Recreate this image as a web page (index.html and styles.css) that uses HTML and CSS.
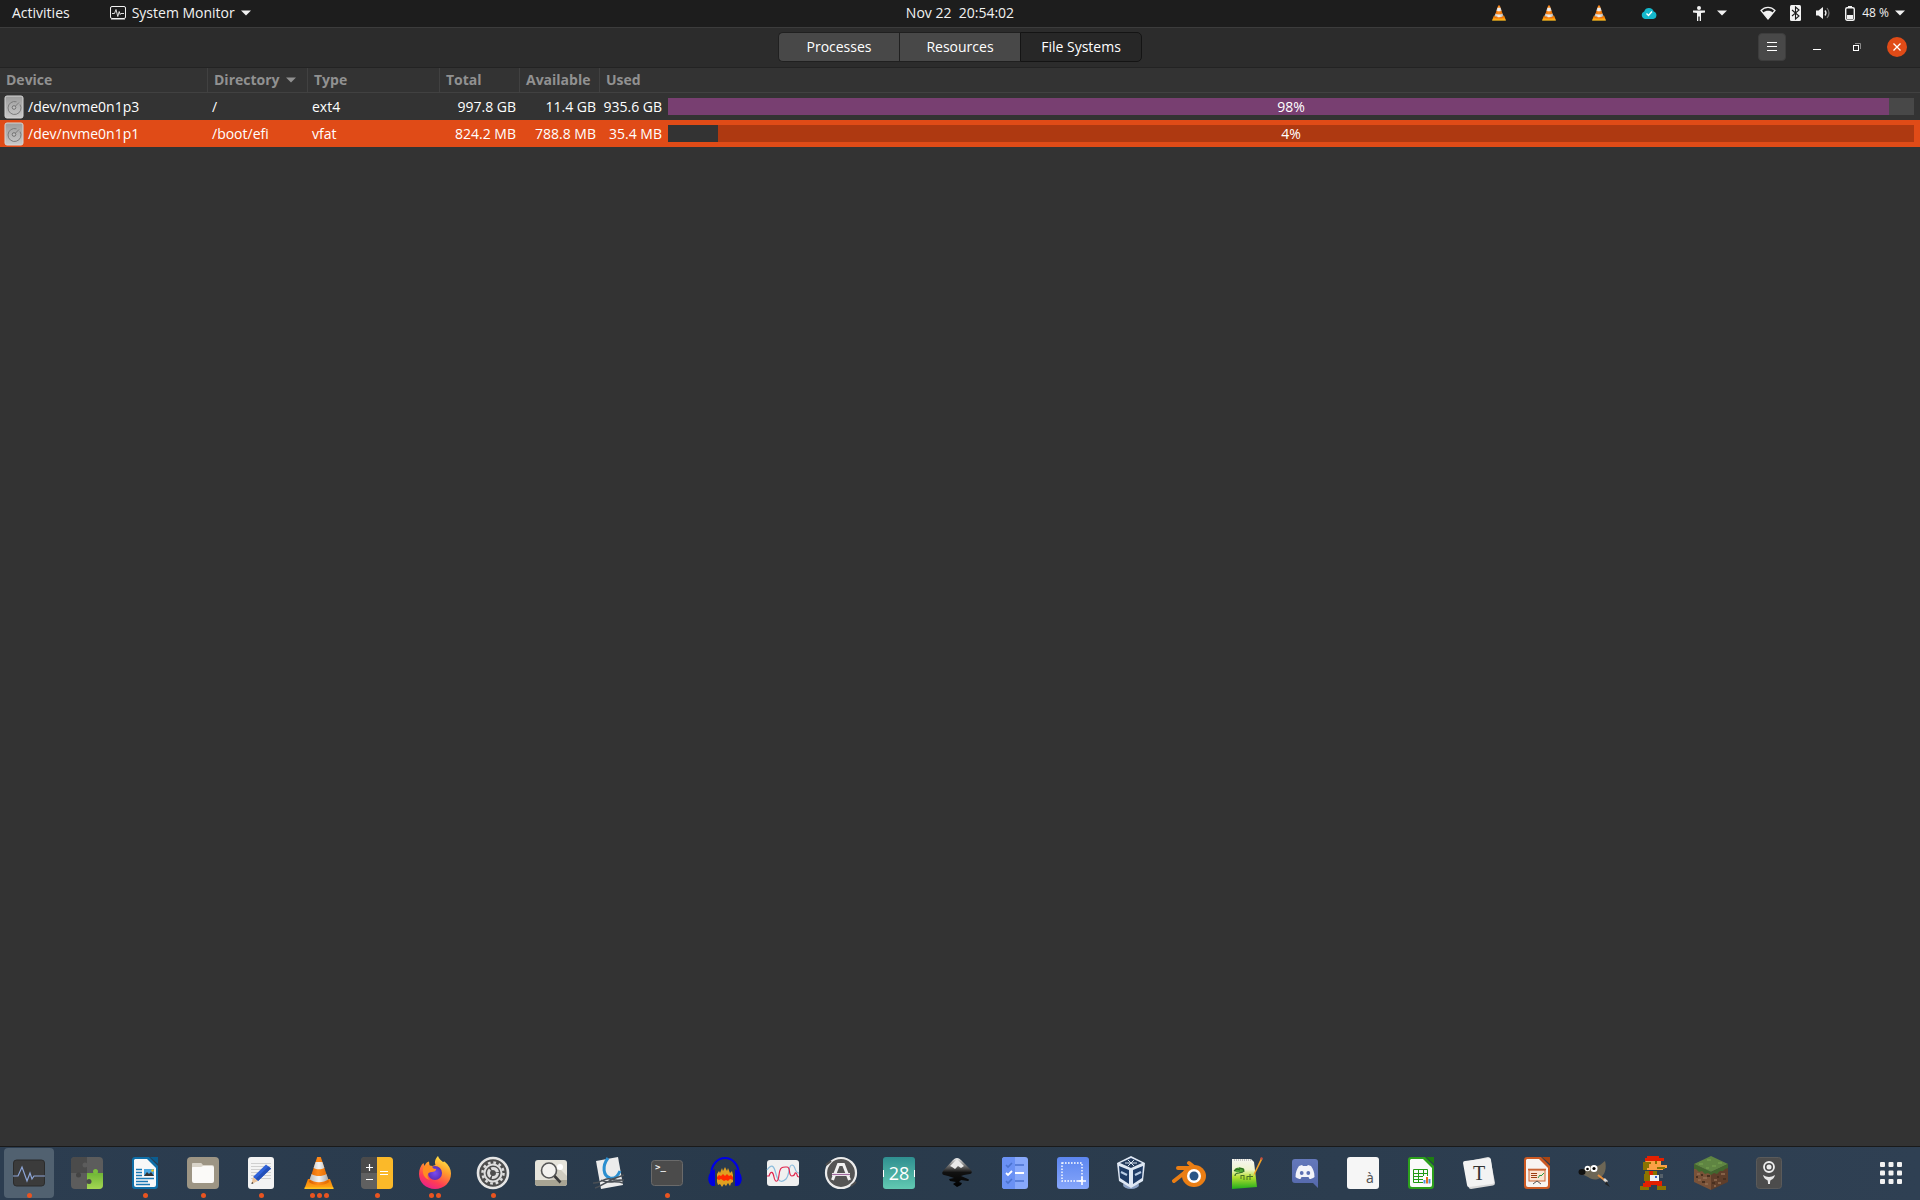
FILE: index.html
```html
<!DOCTYPE html>
<html lang="en">
<head>
<meta charset="utf-8">
<title>System Monitor</title>
<link rel="stylesheet" href="styles.css">
</head>
<body>
<svg class="defs" aria-hidden="true">
  <defs>
    <linearGradient id="gOrange" x1="0" x2="1"><stop offset="0" stop-color="#d95f00"/><stop offset=".45" stop-color="#ff8a1a"/><stop offset="1" stop-color="#e06a00"/></linearGradient>
    <linearGradient id="gSilver" x1="0" x2="1"><stop offset="0" stop-color="#b9b9b9"/><stop offset=".5" stop-color="#f4f4f4"/><stop offset="1" stop-color="#a9a9a9"/></linearGradient>
    <linearGradient id="gBase" x1="0" x2="0" y1="0" y2="1"><stop offset="0" stop-color="#f57900"/><stop offset="1" stop-color="#ffab1a"/></linearGradient>
    <linearGradient id="gGreen" x1="0" x2="0" y1="0" y2="1"><stop offset="0" stop-color="#6fb536"/><stop offset="1" stop-color="#a4d653"/></linearGradient>
    <linearGradient id="gTeal" x1="0" x2="0" y1="0" y2="1"><stop offset="0" stop-color="#2f8f90"/><stop offset="1" stop-color="#62c9b2"/></linearGradient>
    <linearGradient id="gBlue" x1="0" x2="0" y1="0" y2="1"><stop offset="0" stop-color="#5c86f0"/><stop offset="1" stop-color="#86a6fa"/></linearGradient>
    <linearGradient id="gFox" x1=".8" x2=".3" y1="0" y2="1"><stop offset="0" stop-color="#fff04a"/><stop offset=".4" stop-color="#ff9a2c"/><stop offset=".75" stop-color="#ff3d54"/><stop offset="1" stop-color="#e8208c"/></linearGradient>
    <radialGradient id="gGlobe"><stop offset="0" stop-color="#7a4bf0"/><stop offset="1" stop-color="#5a2fb8"/></radialGradient>
    <linearGradient id="gInk" x1="0" x2="0" y1="0" y2="1"><stop offset="0" stop-color="#f5f5f5"/><stop offset=".25" stop-color="#777"/><stop offset=".5" stop-color="#111"/><stop offset="1" stop-color="#000"/></linearGradient>
    <linearGradient id="gNote" x1="0" x2="0" y1="0" y2="1"><stop offset="0" stop-color="#f6f6f2"/><stop offset=".35" stop-color="#f0f4d0"/><stop offset=".6" stop-color="#b6e030"/><stop offset="1" stop-color="#1fae1c"/></linearGradient>
    <linearGradient id="gDisc" x1="0" x2="0" y1="0" y2="1"><stop offset="0" stop-color="#6478bb"/><stop offset="1" stop-color="#5568ab"/></linearGradient>
    <linearGradient id="gDisk" x1="0" x2="0" y1="0" y2="1"><stop offset="0" stop-color="#9c9c9c"/><stop offset="1" stop-color="#c9c9c9"/></linearGradient>
    <symbol id="cone" viewBox="0 0 34 34">
      <path d="M6 23h22l3.500 9.500h-29z" fill="url(#gBase)"/><path d="M2.500 31.500h29v1.500h-29z" fill="#ffc31f"/>
      <path d="M15.200 1h3.600L27 26c-4 4-16 4-20 0z" fill="url(#gOrange)"/>
      <path d="M13.600 6h6.800l2 6c-3 1.800-7.800 1.800-10.800 0zM9.600 18c4 2.800 10.800 2.800 14.800 0l2 5.600c-5 3.400-13.800 3.400-18.800 0z" fill="url(#gSilver)"/>
    </symbol>
    <symbol id="disk" viewBox="0 0 20 24">
      <rect x="1" y="1" width="18" height="22" rx="2" fill="url(#gDisk)" stroke="#d6d6d6"/>
      <path d="M16 9.500A6.500 6.500 0 1 1 12.500 6.800M11.500 11l3.500-3.500" fill="none" stroke="#7b7b7b"/>
      <circle cx="10" cy="12.500" r="1.800" fill="#c2c2c2" stroke="#707070"/>
    </symbol>
    <symbol id="caret" viewBox="0 0 10 6"><path d="M0 .5h10L5 5.500z" fill="currentColor"/></symbol>
  </defs>
</svg>

<header class="topbar">
  <nav class="topbar-left">
    <button class="top-btn">Activities</button>
    <button class="top-btn">
      <svg width="16" height="14" viewBox="0 0 16 14" fill="none" stroke="#f2f2f2"><rect x=".5" y=".5" width="15" height="12" rx="1.500"/><path d="M2 7.500h2.500L6 3.500l1.800 7 1.400-5 1 3 .6-1H14" stroke-width=".9"/><path d="M1 13.500h14" opacity=".5"/></svg>
      System Monitor
      <svg width="10" height="6"><use href="#caret"/></svg>
    </button>
  </nav>
  <button class="top-btn clock">Nov 22&nbsp; 20:54:02</button>
  <div class="tray">
    <button class="tray-btn" aria-label="VLC"><svg width="16" height="16"><use href="#cone"/></svg></button>
    <button class="tray-btn" aria-label="VLC"><svg width="16" height="16"><use href="#cone"/></svg></button>
    <button class="tray-btn" aria-label="VLC"><svg width="16" height="16"><use href="#cone"/></svg></button>
    <button class="tray-btn" aria-label="Cloud sync"><svg width="16" height="12" viewBox="0 0 16 12"><path d="M4 12a4 4 0 0 1-.8-7.600A5 5 0 0 1 12.700 4.600 3.800 3.800 0 0 1 12.200 12z" fill="#14b8cc"/><path d="M5.500 6.500l2 2 3.500-4" fill="none" stroke="#fff" stroke-width="1.400"/></svg></button>
    <button class="top-btn access" aria-label="Accessibility">
      <svg width="12" height="15" viewBox="0 0 12 15" fill="#f2f2f2"><circle cx="6" cy="2" r="2"/><path d="M0 4.500h12v2L8 7v8H6.700v-4.500H5.300V15H4V7L0 6.500z"/></svg>
      <svg width="10" height="6"><use href="#caret"/></svg>
    </button>
    <button class="top-btn status" aria-label="System status">
      <svg width="16" height="14" viewBox="0 0 16 14"><path d="M1 4.500C5 .2 11 .2 15 4.500L8 13z" fill="none" stroke="#f2f2f2" stroke-width="1.200"/><path d="M3 6.500c3-2.400 7-2.400 10 0L8 13z" fill="#f2f2f2"/></svg>
      <svg width="11" height="16" viewBox="0 0 11 16"><rect width="11" height="16" rx="1.500" fill="#f2f2f2"/><path d="M2 5l7 6-3.500 3V2L9 5l-7 6" fill="none" stroke="#1c1c1c" stroke-width="1.100"/></svg>
      <svg width="16" height="14" viewBox="0 0 16 14"><path d="M1 4.500h2.500L8 1v12L3.500 9.500H1z" fill="#f2f2f2"/><path d="M10 4.500q2 2.500 0 5" fill="none" stroke="#f2f2f2" stroke-width="1.300"/><path d="M12 2q4 5 0 10" fill="none" stroke="#777" stroke-width="1.200"/></svg>
      <svg width="10" height="15" viewBox="0 0 10 15"><rect x=".7" y="1.700" width="8.600" height="12.600" rx="1.500" fill="none" stroke="#f2f2f2" stroke-width="1.400"/><path d="M3 0h4v2H3zM2 9h6v4H2z" fill="#f2f2f2"/></svg>
      <span class="battery">48 %</span>
      <svg width="10" height="6"><use href="#caret"/></svg>
    </button>
  </div>
</header>

<div class="headerbar">
  <div class="tabs" role="tablist">
    <button class="tab" role="tab">Processes</button>
    <button class="tab" role="tab">Resources</button>
    <button class="tab active" role="tab" aria-selected="true">File Systems</button>
  </div>
  <div class="controls">
    <button class="menu-btn" aria-label="Menu"><svg width="10" height="10" viewBox="0 0 10 10" stroke="#fff"><path d="M0 .5h10M0 4.500h10M0 8.500h10"/></svg></button>
    <button class="win-btn" aria-label="Minimize"><svg width="8" height="8" viewBox="0 0 8 8"><path d="M0 6h8v1H0z" fill="#fff"/></svg></button>
    <button class="win-btn" aria-label="Restore"><svg width="8" height="8" viewBox="0 0 8 8" fill="none"><path d="M2 .5h5.500V6" stroke="#8a8a8a"/><rect x=".5" y="2.500" width="5" height="5" stroke="#fff"/></svg></button>
    <button class="win-btn close" aria-label="Close"><svg width="8" height="8" viewBox="0 0 8 8"><path d="M.5.500l7 7M7.500.500l-7 7" stroke="#fff" stroke-width="1.300"/></svg></button>
  </div>
</div>

<main class="content">
  <table class="fs">
    <colgroup><col class="c-device"><col class="c-dir"><col class="c-type"><col class="c-size"><col class="c-size"><col class="c-used"><col></colgroup>
    <thead>
      <tr><th>Device</th><th aria-sort="ascending">Directory <svg class="sort" width="10" height="6"><use href="#caret"/></svg></th><th>Type</th><th>Total</th><th>Available</th><th colspan="2">Used</th></tr>
    </thead>
    <tbody>
      <tr>
        <td><div class="device"><svg width="20" height="24"><use href="#disk"/></svg>/dev/nvme0n1p3</div></td>
        <td>/</td><td>ext4</td><td class="num">997.8 GB</td><td class="num">11.4 GB</td><td class="num">935.6 GB</td>
        <td class="usage"><div class="bar"><div class="fill" style="width:98%"></div><span>98%</span></div></td>
      </tr>
      <tr class="selected">
        <td><div class="device"><svg width="20" height="24"><use href="#disk"/></svg>/dev/nvme0n1p1</div></td>
        <td>/boot/efi</td><td>vfat</td><td class="num">824.2 MB</td><td class="num">788.8 MB</td><td class="num">35.4 MB</td>
        <td class="usage"><div class="bar"><div class="fill" style="width:4%"></div><span>4%</span></div></td>
      </tr>
    </tbody>
  </table>
</main>

<footer class="dock">
  <button class="app current" aria-label="System Monitor"><svg viewBox="0 0 34 34"><rect x="1.500" y="4" width="31" height="26" rx="3" fill="#3b3b3b" stroke="#2b2b2b"/><path d="M1 20h5l4-9 5 14 3-8 2 6 2-3h11" fill="none" stroke="#8ea6d8" stroke-width="1.200"/></svg><span class="dots"><i></i></span></button>
  <button class="app" aria-label="Extensions"><svg viewBox="0 0 34 34"><rect x="1" y="1" width="32" height="32" rx="4" fill="#5c5c5c"/><path d="M5 1h12v16H1V5a4 4 0 0 1 4-4z" fill="#4b4b4b"/><path d="M17 17h16v12a4 4 0 0 1-4 4H17z" fill="url(#gGreen)"/><circle cx="25.500" cy="15.500" r="2.500" fill="#79bd3c"/><circle cx="15" cy="9" r="2.500" fill="#5c5c5c"/><circle cx="8.500" cy="19" r="2.500" fill="#444"/><circle cx="19" cy="25.500" r="2.500" fill="#4a4a4a"/></svg></button>
  <button class="app" aria-label="LibreOffice Writer"><svg viewBox="0 0 34 34"><path d="M7 1h14l9 9v20a3 3 0 0 1-3 3H7a3 3 0 0 1-3-3V4a3 3 0 0 1 3-3z" fill="#0f6fa8"/><path d="M7 3h12l9 9v17a2 2 0 0 1-2 2H8a2 2 0 0 1-2-2V4z" fill="#f8f8f8"/><path d="M22 1h8v7z" fill="#0b5d90"/><rect x="16" y="13" width="10" height="7" fill="#4aa6e0"/><path d="M16 20l3-4 2 2 2-2 3 4z" fill="#333"/><circle cx="24.500" cy="14.500" r="1.200" fill="#f5c211"/><path d="M8 13.500h6M8 16.500h6M8 19.500h6M8 22.500h18M8 25.500h12M8 28.500h14" stroke="#1a78b4" stroke-width="1.500"/></svg><span class="dots"><i></i></span></button>
  <button class="app" aria-label="Files"><svg viewBox="0 0 34 34"><rect x="1" y="1" width="32" height="32" rx="4" fill="#9d9584"/><path d="M6 12V8q0-1 2-1h7l2 2h9q2 0 2 2v4z" fill="#d9d4c9"/><rect x="6" y="10" width="22" height="17" rx="2" fill="#fbfaf8"/><path d="M6 11V8q0-1 2-1h7l2 3-2 1z" fill="#d9d4c9"/></svg><span class="dots"><i></i></span></button>
  <button class="app" aria-label="Text Editor"><svg viewBox="0 0 34 34"><rect x="4" y="1" width="26" height="32" rx="3" fill="#f3f3f3"/><path d="M7 7.500h20M7 10.500h20M7 13.500h20M7 16.500h20M7 19.500h20M7 22.500h20" stroke="#cfcfcf"/><path d="M22 8.500l5 4L14 25l-5-4z" fill="#2f62d8"/><path d="M24.500 10.500l2.500 2L14 25l-2.500-2z" fill="#234fb8"/><path d="M9 21l5 4-6.500 3z" fill="#e9c29b"/><path d="M8 26l1.500 1.200-2 .8z" fill="#222"/></svg><span class="dots"><i></i></span></button>
  <button class="app" aria-label="VLC"><svg viewBox="0 0 34 34"><use href="#cone"/></svg><span class="dots"><i></i><i></i><i></i></span></button>
  <button class="app" aria-label="Calculator"><svg viewBox="0 0 34 34"><rect x="1" y="1" width="32" height="32" rx="4" fill="#606060"/><path d="M5 1h12v16H1V5a4 4 0 0 1 4-4z" fill="#4a4a4a"/><path d="M17 1h12a4 4 0 0 1 4 4v24a4 4 0 0 1-4 4H17z" fill="#fbb929"/><path d="M6 11.500h7M9.500 8v7M6 23.500h7M20 15.500h8M20 18.500h8" stroke="#fff" stroke-width="1.200"/></svg><span class="dots"><i></i></span></button>
  <button class="app" aria-label="Firefox"><svg viewBox="0 0 34 34"><path d="M17 33C8 33 1 26.500 1 18 1 13 3 9 5.500 7l1 3C8 7 9 6 11 5.500l.5 4 3 .5 3-1C16 5 18 2 20 0c1 3 3 4 5 6l1.500-.5C31 9 33 13 33 17.500 33 26.500 26 33 17 33z" fill="url(#gFox)"/><circle cx="17" cy="17" r="7" fill="url(#gGlobe)"/><path d="M6 10c4-2 8 0 10 3 4-1 2 3-2 3-5 0-6 5-2 8-6-1-9-8-6-14z" fill="#ff8d22"/></svg><span class="dots"><i></i><i></i></span></button>
  <button class="app" aria-label="Settings"><svg viewBox="0 0 34 34"><circle cx="17" cy="17" r="15" fill="#4d4d4d" stroke="#e5e5e5" stroke-width="2.600"/><circle cx="17" cy="17" r="10.500" fill="none" stroke="#dedede" stroke-width="2.500" stroke-dasharray="2.700 2.800"/><circle cx="17" cy="17" r="8.500" fill="none" stroke="#dedede" stroke-width="2"/><circle cx="17" cy="17" r="4.500" fill="none" stroke="#dedede" stroke-width="3" stroke-dasharray="8 1.400"/></svg><span class="dots"><i></i></span></button>
  <button class="app" aria-label="Image Viewer"><svg viewBox="0 0 34 34"><rect x="1" y="4" width="32" height="26" rx="3" fill="#e6e4db"/><path d="M1 24h32v3a3 3 0 0 1-3 3H4a3 3 0 0 1-3-3z" fill="#a8a493"/><path d="M16 24l9-12 8 8v4z" fill="#cfccc0"/><circle cx="26" cy="11" r="3" fill="#fff"/><circle cx="15" cy="14.500" r="7.500" fill="#f4f4f2" fill-opacity=".85" stroke="#555" stroke-width="1.600"/><path d="M20.500 20l6 6.500" stroke="#3a3a3a" stroke-width="2.600"/></svg></button>
  <button class="app" aria-label="Document Viewer"><svg viewBox="0 0 34 34"><path d="M4 5l22-4 5 28-22 4z" fill="#ececec"/><path d="M16 2c-6 8-5 18 2 20 4 1 8-2 10-7" fill="none" stroke="#2b8fd0" stroke-width="3"/><path d="M1 27c7 1 12-6 17-4s8 1 14 1M3 32c8-2 11-8 29-13M9 24c5 4 15 0 22 3" fill="none" stroke="#4a4f55" stroke-width="1.600"/></svg></button>
  <button class="app" aria-label="Terminal"><svg viewBox="0 0 34 34"><rect x="1.500" y="4.500" width="31" height="25" rx="3" fill="#4b4b4b" stroke="#6a6a6a"/><text x="5" y="14" class="term">&gt;_</text></svg><span class="dots"><i></i></span></button>
  <button class="app" aria-label="Audacity"><svg viewBox="0 0 34 34"><path d="M3 20C3-4 31-4 31 20" fill="none" stroke="#0000e6" stroke-width="2.200"/><path d="M7 13v17H4c-5-3-5-11 0-15zM27 13v17h3c5-3 5-11 0-15z" fill="#0000e0"/><path d="M9 18l2-3 1 2 2-5 1 3 2-4 2 4 1-3 2 5 2-2 1 4v7l-2 1-1 3-2-3-2 3-2-2-2 3-2-3-2 1-1-3z" fill="#e0a020"/><path d="M9 21l2-2 2 1 2-2 2 2 2-2 2 2 2-1 2 2v3l-3-1-2 2-2-1-2 1-3-2-2 1-2-1z" fill="#ff2a00"/></svg></button>
  <button class="app" aria-label="Power Statistics"><svg viewBox="0 0 34 34"><rect x="1" y="4" width="32" height="26" rx="3" fill="#f0f0f0"/><path d="M1 14c5-7 7-4 9 4s6 9 10 5 2-14 6-14 2 8 7 8" fill="none" stroke="#8cbcdc" stroke-width="1.200"/><path d="M1 20h2c2-6 4-4 5 1s4 7 5-2 4-8 8-8 1 9 5 9 2-4 4-3 0 4 3 4" fill="none" stroke="#e0244c" stroke-width="1.200"/></svg></button>
  <button class="app" aria-label="Software Updater"><svg viewBox="0 0 34 34"><circle cx="17" cy="17" r="15" fill="#555" stroke="#ececec" stroke-width="2.200"/><path d="M8.500 24l6-15.500h5l6 15.500M8 18.500h18" fill="none" stroke="#f2f2f2" stroke-width="3"/><path d="M8 18.500h18" stroke="#a16a9f" stroke-width="1.200"/><path d="M2 9l5-4M27 30l5-4" stroke="#4d4d4d" stroke-width="2"/></svg></button>
  <button class="app" aria-label="Calendar"><svg viewBox="0 0 34 34"><rect x="1" y="1" width="32" height="32" rx="3" fill="url(#gTeal)"/><path d="M1.500 14v7M32.500 14v7" stroke="#fff"/><text x="17" y="24" class="day">28</text></svg></button>
  <button class="app" aria-label="Inkscape"><svg viewBox="0 0 34 34"><path d="M17 2q2 0 4 2l10 10q2 3-1 4l-6 1-3 1 7 3q2 1 0 2l-7-1-2 2 3 1-1 2-4 2-4-3 3-2-6-1-1-2 5-1-6-2-4-1q-3-1-1-4L13 4q2-2 4-2z" fill="url(#gInk)"/><path d="M17 3l7 7-3 2-3-2-3 3-3-2-2-1z" fill="#e9e9e9"/></svg></button>
  <button class="app" aria-label="To Do"><svg viewBox="0 0 34 34"><rect x="4" y="1" width="26" height="32" rx="3" fill="#88a9fb"/><path d="M7 1h10v32H7a3 3 0 0 1-3-3V4a3 3 0 0 1 3-3z" fill="#6a91f4"/><path d="M8 9l2 2 4-4M8 25l2 2 4-4M17 9h9M17 25h9" fill="none" stroke="#4a72cf" stroke-width="1.600"/><path d="M8 17l2 2 4-4M17 17h9" fill="none" stroke="#fff" stroke-width="1.800"/></svg></button>
  <button class="app" aria-label="Screenshot"><svg viewBox="0 0 34 34"><rect x="1" y="1" width="32" height="32" rx="3" fill="url(#gBlue)"/><rect x="6" y="7" width="20" height="18" fill="none" stroke="#fff" stroke-width="1.400" stroke-dasharray="1.600 1.400"/><path d="M22 25h8M26 21v8" stroke="#fff" stroke-width="1.600"/></svg></button>
  <button class="app" aria-label="VirtualBox"><svg viewBox="0 0 34 34"><ellipse cx="17" cy="29" rx="8" ry="4" fill="#8ba1c4"/><path d="M17 0l14 7-2 18-12 7-12-7L3 7z" fill="#dfe8f4"/><path d="M17 2l11 5-11 5L6 7z" fill="#233a5c"/><path d="M5 10l10 4v14l-9-6zM29 10l-10 4v14l9-6z" fill="#1f3c66"/><path d="M11 7l12 0M14 4l6 6M20 4l-6 6" stroke="#d8e2ef"/><path d="M7 16l6 3M21 19l6-3" stroke="#b8cce5" stroke-width="2"/></svg></button>
  <button class="app" aria-label="Blender"><svg viewBox="0 0 34 34"><path d="M2 25L16 14M6 12h13M17 7l10 8" stroke="#ea7e14" stroke-width="4" stroke-linecap="round"/><ellipse cx="22" cy="20" rx="12" ry="11" fill="#ea7e14"/><circle cx="22" cy="20" r="7" fill="#fff"/><circle cx="22" cy="20" r="4.500" fill="#275586"/></svg></button>
  <button class="app" aria-label="Notepad++"><svg viewBox="0 0 34 34"><path d="M2 3l19 0 3 3 3 25-25 2z" fill="url(#gNote)"/><path d="M4 4h18" stroke="#999" stroke-dasharray="1 1"/><ellipse cx="9.500" cy="14" rx="5" ry="2.500" fill="#51a735"/><path d="M5 20q0-3 4-3l4-1M4 15l3-2 3 1M9 12l4 1 1 3" fill="none" stroke="#2f6a22" stroke-width="1.200"/><path d="M11 19v4M14 19v5M17 20v4M20 18v6M11 19.500h3M17 20.500h6" stroke="#476f2b"/><path d="M31 2l1.500 1L25 18l-1.500 2 .5-3z" fill="#f3a326"/><path d="M31 1l2 1-1 2-2-1z" fill="#c74c3c"/></svg></button>
  <button class="app" aria-label="Discord"><svg viewBox="0 0 34 34"><path d="M7 3h20a3 3 0 0 1 3 3v26l-5-5H7a3 3 0 0 1-3-3V6a3 3 0 0 1 3-3z" fill="url(#gDisc)"/><path d="M11 10l3-1 1 1h4l1-1 3 1c2 3 3.500 6 3.500 11-2 1.500-3.500 2-5 2l-1-2h-7l-1 2c-1.500 0-3-.5-5-2 0-5 1.500-8 3.500-11z" fill="#f4f4fa"/><circle cx="13.700" cy="17" r="1.900" fill="#5d70b3"/><circle cx="20.300" cy="17" r="1.900" fill="#5d70b3"/></svg></button>
  <button class="app" aria-label="Characters"><svg viewBox="0 0 34 34"><rect x="1" y="1" width="32" height="32" rx="3" fill="#f6f6f6"/><text x="24" y="27" class="glyph">à</text></svg></button>
  <button class="app" aria-label="LibreOffice Calc"><svg viewBox="0 0 34 34"><path d="M7 1h14l9 9v20a3 3 0 0 1-3 3H7a3 3 0 0 1-3-3V4a3 3 0 0 1 3-3z" fill="#2ca01c"/><path d="M7 3h12l9 9v17a2 2 0 0 1-2 2H8a2 2 0 0 1-2-2V4z" fill="#fafafa"/><path d="M22 1h8v7z" fill="#1d7d12"/><path d="M9.500 13.500h14v13h-14zM9 17.500h15M9 20.500h15M9 23.500h15M14.500 13v14M19.500 13v14" fill="none" stroke="#219a12"/><rect x="19" y="20" width="8" height="8" fill="#fff"/><path d="M20.500 24v3.500" stroke="#4a90d9" stroke-width="2"/><path d="M23 21v6.500" stroke="#e66f1d" stroke-width="2"/><path d="M25.500 23v4.500" stroke="#4a90d9" stroke-width="2"/></svg></button>
  <button class="app" aria-label="Typora"><svg viewBox="0 0 34 34"><path d="M2 6L26 1q2 0 2.500 2L33 27q0 2-2 2.500L9 33q-2 0-2.500-2z" fill="#d8d8d8"/><path d="M1 7q0-2 2-2l24-3q2 0 2 2l3 22q0 2-2 2L7 31q-2 0-2-2z" fill="#f3f3f3"/><text x="17" y="24" class="serif-t">T</text></svg></button>
  <button class="app" aria-label="LibreOffice Impress"><svg viewBox="0 0 34 34"><path d="M7 1h14l9 9v20a3 3 0 0 1-3 3H7a3 3 0 0 1-3-3V4a3 3 0 0 1 3-3z" fill="#cc5a24"/><path d="M7 3h12l9 9v17a2 2 0 0 1-2 2H8a2 2 0 0 1-2-2V4z" fill="#f8f4f1"/><path d="M22 1h8v7z" fill="#a84412"/><rect x="9" y="14" width="16" height="11" fill="#fce3d2" stroke="#c96434"/><path d="M8 13.500h18" stroke="#c96434" stroke-width="1.600"/><path d="M11 17.500h6M11 19.500h6M11 21.500h6" stroke="#9b3d12"/><path d="M18 22l2-3 1 1 3-3" fill="none" stroke="#259b44"/><path d="M13 28l4-3 4 3" fill="none" stroke="#555"/></svg></button>
  <button class="app" aria-label="GIMP"><svg viewBox="0 0 34 34"><path d="M3 15c3-1 4-4 7-5 5-1 8 1 12-1 2-1 3-3 5-4 2 7 0 14-5 17-5 3-9 1-12-1-2-1-4-2-7-3z" fill="#6d6655"/><ellipse cx="4" cy="16" rx="3.500" ry="3" fill="#111"/><circle cx="9.500" cy="12.500" r="2.800" fill="#fff"/><circle cx="16" cy="12.500" r="3.500" fill="#fff"/><circle cx="9.500" cy="13" r="1.300"/><circle cx="16" cy="12.500" r="1.600"/><path d="M20 19l9 7" stroke="#e98f3c" stroke-width="2"/><path d="M26 23l3 3" stroke="#ddd" stroke-width="2.500"/><path d="M28 25l4 6-5-3z" fill="#222"/></svg></button>
  <button class="app" aria-label="Super Mario"><svg viewBox="0 0 34 34"><path d="M11 0h12v2h5v3H9V2h2z" fill="#e32000"/><path d="M9 5h16v4h6v3h-4v2H11V8z" fill="#fba044"/><path d="M7 6h8v2h-2v4h-2v2H7zM19 5h2v3h-2zM21 11h8v2h-8zM9 15h12v4H9zM8 18h7v7H8zM4 30h9v4H4zM21 30h9v4h-9z" fill="#8a7300"/><path d="M13 15h4v4h-4zM9 25h17v5h-5v-1h-6v2H7v-4h2z" fill="#e32000"/><path d="M14 19h9v6h-9z" fill="#eef1f5"/><path d="M19 20h2v2h-2z" fill="#3a62c8"/><path d="M24 18h3v4h-3z" fill="#55606a"/></svg></button>
  <button class="app" aria-label="Minecraft"><svg viewBox="0 0 34 34"><path d="M0 8l17 8v18L0 26z" fill="#7a5238"/><path d="M34 8l-17 8v18l17-8z" fill="#5f3e2a"/><path d="M17 0l17 8-17 8L0 8z" fill="#5f8542"/><path d="M0 8l17 8 17-8v4l-3 1-2 2-3 0-3 3-3-1-3 2-3-2-3 1-3-3-3 1-3-3-2 0z" fill="#42662e"/><path d="M5 8h4M13 4h4M18 10h4M24 7h4M12 12h3" stroke="#729a4c" stroke-width="1.500"/><path d="M3 18h3M9 22h4M4 24h3M11 28h3M20 24h3M27 18h4M24 27h3M20 30h2" stroke="#936e52" stroke-width="1.500"/><path d="M7 19h2M13 20h3M2 21h2M8 26h3M23 21h2M29 23h3M18 27h3" stroke="#49301f" stroke-width="2"/></svg></button>
  <button class="app" aria-label="Gnome Tweaks"><svg viewBox="0 0 34 34"><rect x="4.500" y="1.500" width="25" height="31" rx="3" fill="#4c4c4c" stroke="#5a5a5a"/><circle cx="17" cy="11" r="5" fill="none" stroke="#eee" stroke-width="1.800"/><circle cx="17" cy="11" r="2.500" fill="#eee"/><path d="M11 19q3 2 6 2t6-2q-1 4-4 5-1 0-1 4h-2q0-4-1-4-3-1-4-5z" fill="#e6e6e6"/></svg></button>
  <button class="app all-apps" aria-label="Show Applications"><svg viewBox="0 0 34 34" fill="#f2f2f2"><rect x="6" y="6" width="5" height="5" rx="1"/><rect x="14.500" y="6" width="5" height="5" rx="1"/><rect x="23" y="6" width="5" height="5" rx="1"/><rect x="6" y="14.500" width="5" height="5" rx="1"/><rect x="14.500" y="14.500" width="5" height="5" rx="1"/><rect x="23" y="14.500" width="5" height="5" rx="1"/><rect x="6" y="23" width="5" height="5" rx="1"/><rect x="14.500" y="23" width="5" height="5" rx="1"/><rect x="23" y="23" width="5" height="5" rx="1"/></svg></button>
</footer>
</body>
</html>
```
FILE: styles.css
```css
* { box-sizing: border-box; }

body {
  margin: 0;
  min-height: 100vh;
  display: flex;
  flex-direction: column;
  background: #333333;
  color: #ffffff;
  font: 14px/20px "Open Sans", "Noto Sans", sans-serif;
}

button {
  margin: 0;
  padding: 0;
  border: 0;
  background: none;
  color: inherit;
  font: inherit;
}

svg { display: block; flex: none; }
.defs { position: absolute; width: 0; height: 0; }

/* Top panel */
.topbar {
  display: grid;
  grid-template-columns: 1fr auto 1fr;
  align-items: center;
  height: 27px;
  padding-bottom: 1px;
  background: #1d1d1d;
  color: #f2f2f2;
}
.topbar-left { display: flex; gap: 40px; padding-left: 12px; }
.top-btn { display: flex; align-items: center; gap: 6px; }
.tray { display: flex; align-items: center; justify-content: flex-end; padding-right: 15px; }
.tray-btn { display: flex; justify-content: center; width: 50px; }
.access { gap: 12px; margin: 0 33px 0 19px; }
.status { gap: 14px; }
.status .battery { margin: 0 -8px 0 -7px; font-size: 12px; }

/* Window header */
.headerbar {
  display: grid;
  grid-template-columns: 1fr auto 1fr;
  align-items: center;
  height: 41px;
  padding-bottom: 1px;
  border-top: 1px solid #3c3c3c;
  border-bottom: 1px solid #232323;
  background: #2c2c2c;
}
.tabs { grid-column: 2; display: flex; }
.tab {
  width: 121px;
  height: 30px;
  border: 1px solid #202020;
  border-right: 0;
  background: #484848;
}
.tab:first-child { border-radius: 5px 0 0 5px; }
.tab.active {
  width: 122px;
  border: 1px solid #141414;
  border-radius: 0 5px 5px 0;
  background: #272727;
}
.controls { display: flex; align-items: center; justify-content: flex-end; gap: 20px; padding-right: 13px; }
.menu-btn {
  display: grid;
  place-items: center;
  width: 28px;
  height: 28px;
  margin-right: 1px;
  border: 1px solid #3d3d3d;
  border-radius: 4px;
  background: #484848;
}
.win-btn { display: grid; place-items: center; width: 20px; height: 20px; }
.close { border-radius: 50%; background: #e04b17; }

/* File system list */
.content { flex: 1; }
.fs { width: 100%; table-layout: fixed; border-collapse: separate; border-spacing: 0; }
.c-device { width: 208px; }
.c-dir { width: 100px; }
.c-type { width: 132px; }
.c-size { width: 80px; }
.c-used { width: 66px; }
th {
  height: 25px;
  padding: 0 0 0 6px;
  border-right: 1px solid #414141;
  border-bottom: 1px solid #414141;
  color: #919191;
  text-align: left;
  font-weight: 700;
  white-space: nowrap;
}
th:last-child { border-right: 0; }
.sort { display: inline-block; margin-left: 3px; vertical-align: 2px; }
td { height: 27px; padding: 0 4px; white-space: nowrap; }
.num { padding: 0 4px 0 0; text-align: right; }
.device { display: flex; align-items: center; gap: 4px; }
.selected td { background: #e04b17; }
.usage { padding: 0 6px 0 2px; }
.bar { display: grid; height: 17px; line-height: 17px; background: #484848; }
.bar > * { grid-area: 1 / 1; }
.bar span { text-align: center; }
.fill { background: #783f71; }
.selected .bar { background: #ae3911; }
.selected .fill { background: #333333; }

/* Dock */
.dock {
  display: flex;
  gap: 8px;
  height: 54px;
  padding: 1px 4px 3px;
  border-top: 1px solid #1a1a1a;
  background: linear-gradient(90deg, #2c3d50, #293a4b 40%, #2f4053);
}
.app { position: relative; display: grid; place-items: center; width: 50px; height: 50px; border-radius: 4px; }
.app > svg { width: 34px; height: 34px; }
.current { background: #516170; }
.all-apps { margin-left: auto; }
.dots { position: absolute; left: 0; right: 0; bottom: 0; display: flex; justify-content: center; gap: 2px; }
.dots i { width: 5px; height: 5px; border-radius: 50%; background: #e95420; }
.term { font: bold 9px "DejaVu Sans Mono", monospace; fill: #f2f2f2; }
.day { font: 18px "Open Sans", sans-serif; fill: #ffffff; text-anchor: middle; }
.glyph { font: 14px "Noto Sans", sans-serif; fill: #555555; text-anchor: middle; }
.serif-t { font: 20px "Liberation Serif", serif; fill: #333333; text-anchor: middle; }
```
